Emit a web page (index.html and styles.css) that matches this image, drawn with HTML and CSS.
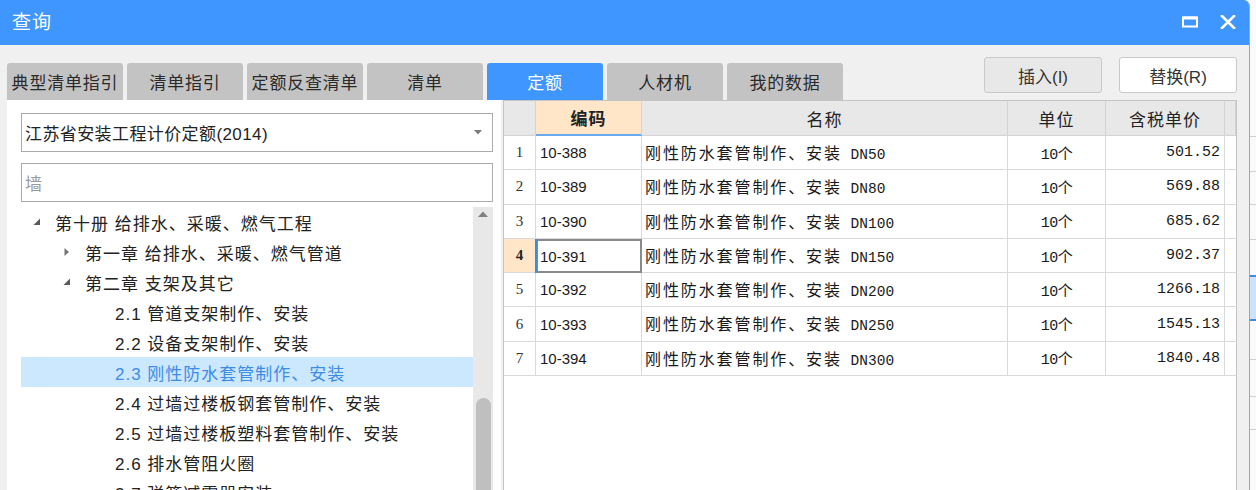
FILE: index.html
```html
<!DOCTYPE html>
<html lang="zh">
<head>
<meta charset="utf-8">
<title>查询</title>
<link rel="stylesheet" href="styles.css">
</head>
<body>
<div class="screen">
  <div class="dialog">
    <div class="titlebar">
      <span class="title">查询</span>
      <div class="win-btns">
        <svg class="win-ico" width="16" height="12" viewBox="0 0 16 12"><rect x="1" y="1.5" width="14" height="9" fill="none" stroke="#fff" stroke-width="2"/><rect x="1" y="0.5" width="14" height="3" fill="#fff"/></svg>
        <svg class="win-ico close" width="16" height="14" viewBox="0 0 16 14"><path d="M2 1 L14 13 M14 1 L2 13" stroke="#fff" stroke-width="2.6" stroke-linecap="square"/></svg>
      </div>
    </div>
    <div class="body">
      <div class="topbar">
        <div class="tabs">
          <div class="tab">典型清单指引</div>
          <div class="tab">清单指引</div>
          <div class="tab">定额反查清单</div>
          <div class="tab">清单</div>
          <div class="tab active">定额</div>
          <div class="tab">人材机</div>
          <div class="tab">我的数据</div>
        </div>
        <div class="actions">
          <button class="btn btn-insert">插入(I)</button>
          <button class="btn btn-replace">替换(R)</button>
        </div>
      </div>
      <div class="main">
        <div class="left">
          <div class="select">
            <span>江苏省安装工程计价定额(2014)</span>
            <svg width="8" height="5" viewBox="0 0 8 5"><path d="M0 0 H8 L4 4.5 Z" fill="#7a7a7a"/></svg>
          </div>
          <div class="search">墙</div>
          <div class="tree">
            <div class="tree-list">
              <div class="node lv1"><svg class="tw" width="8" height="8" viewBox="0 0 8 8"><path d="M7 0.5 V7 H0.5 Z" fill="#5a5a5a"/></svg><span>第十册 给排水、采暖、燃气工程</span></div>
              <div class="node lv2"><svg class="tw" width="8" height="10" viewBox="0 0 8 10"><path d="M1.5 1 L6 5 L1.5 9 Z" fill="#777"/></svg><span>第一章 给排水、采暖、燃气管道</span></div>
              <div class="node lv2"><svg class="tw" width="8" height="8" viewBox="0 0 8 8"><path d="M7 0.5 V7 H0.5 Z" fill="#5a5a5a"/></svg><span>第二章 支架及其它</span></div>
              <div class="node lv3"><span>2.1 管道支架制作、安装</span></div>
              <div class="node lv3"><span>2.2 设备支架制作、安装</span></div>
              <div class="node lv3 selected"><span>2.3 刚性防水套管制作、安装</span></div>
              <div class="node lv3"><span>2.4 过墙过楼板钢套管制作、安装</span></div>
              <div class="node lv3"><span>2.5 过墙过楼板塑料套管制作、安装</span></div>
              <div class="node lv3"><span>2.6 排水管阻火圈</span></div>
              <div class="node lv3"><span>2.7 弹簧减震器安装</span></div>
            </div>
            <div class="vscroll">
              <svg class="up" width="10" height="6" viewBox="0 0 10 6"><path d="M0 6 L5 0.5 L10 6 Z" fill="#808080"/></svg>
              <div class="thumb"></div>
            </div>
          </div>
        </div>
        <div class="right">
          <div class="grid">
            <div class="hd"></div>
            <div class="hd hd-code">编码</div>
            <div class="hd">名称</div>
            <div class="hd">单位</div>
            <div class="hd">含税单价</div>
            <div class="hd"></div>

            <div class="c num">1</div><div class="c code">10-388</div><div class="c name">刚性防水套管制作、安装<span class="dn">&nbsp;DN50</span></div><div class="c unit">10个</div><div class="c price">501.52</div><div class="c gut"></div>
            <div class="c num">2</div><div class="c code">10-389</div><div class="c name">刚性防水套管制作、安装<span class="dn">&nbsp;DN80</span></div><div class="c unit">10个</div><div class="c price">569.88</div><div class="c gut"></div>
            <div class="c num">3</div><div class="c code">10-390</div><div class="c name">刚性防水套管制作、安装<span class="dn">&nbsp;DN100</span></div><div class="c unit">10个</div><div class="c price">685.62</div><div class="c gut"></div>
            <div class="c num cur">4</div><div class="c code focus">10-391</div><div class="c name">刚性防水套管制作、安装<span class="dn">&nbsp;DN150</span></div><div class="c unit">10个</div><div class="c price">902.37</div><div class="c gut"></div>
            <div class="c num">5</div><div class="c code">10-392</div><div class="c name">刚性防水套管制作、安装<span class="dn">&nbsp;DN200</span></div><div class="c unit">10个</div><div class="c price">1266.18</div><div class="c gut"></div>
            <div class="c num">6</div><div class="c code">10-393</div><div class="c name">刚性防水套管制作、安装<span class="dn">&nbsp;DN250</span></div><div class="c unit">10个</div><div class="c price">1545.13</div><div class="c gut"></div>
            <div class="c num">7</div><div class="c code">10-394</div><div class="c name">刚性防水套管制作、安装<span class="dn">&nbsp;DN300</span></div><div class="c unit">10个</div><div class="c price">1840.48</div><div class="c gut"></div>
          </div>
        </div>
      </div>
    </div>
  </div>
  <div class="strip">
    <div class="s1"></div>
    <div class="s2"></div>
    <div class="s3"></div>
    <div class="s4"></div>
    <div class="s5"></div>
    <div class="s6 sel"></div>
    <div class="s7"></div>
    <div class="s8"></div>
    <div class="s9"></div>
    <div class="s10"></div>
  </div>
</div>
</body>
</html>
```

FILE: styles.css
```css
* { box-sizing: border-box; }
html, body { margin: 0; padding: 0; background: #fff; }
body {
  font-family: "Liberation Sans", "Noto Sans CJK SC", sans-serif;
  color: #222;
  width: 1256px;
  height: 490px;
  overflow: hidden;
}
.screen { display: flex; width: 1256px; height: 490px; }

.dialog {
  width: 1250px;
  height: 490px;
  border-right: 1px solid #a4a4a4;
  border-top-right-radius: 6px;
  overflow: hidden;
  display: flex;
  flex-direction: column;
  background: #f0f0f0;
}

.titlebar {
  height: 45px;
  background: #4096ff;
  display: flex;
  align-items: center;
  padding-left: 12px;
  flex: none;
}
.title {
  color: #fff;
  font-size: 19px;
  letter-spacing: 1px;
  line-height: 45px;
}
.win-btns {
  margin-left: auto;
  display: flex;
  align-items: center;
  gap: 22px;
  margin-right: 13px;
  margin-top: -2px;
}
.win-ico { display: block; }

.body { flex: 1; display: flex; flex-direction: column; }

.topbar {
  height: 55px;
  display: flex;
  padding-left: 7px;
  flex: none;
}
.tabs { display: flex; gap: 4px; align-self: flex-end; }
.tab {
  width: 116px;
  height: 37px;
  background: #c3c3c3;
  border-radius: 3px 3px 0 0;
  font-size: 17px;
  letter-spacing: 0.8px;
  color: #2a2a2a;
  display: flex;
  align-items: center;
  justify-content: center;
}
.tab.active { background: #4096ff; color: #fff; }

.actions {
  margin-left: auto;
  margin-right: 12px;
  padding-top: 12px;
  display: flex;
  gap: 17px;
  align-items: flex-start;
}
.btn {
  width: 118px;
  height: 36px;
  border: 1px solid #c9c9c9;
  border-radius: 3px;
  font-family: "Liberation Sans", "Noto Sans CJK SC", sans-serif;
  font-size: 17px;
  color: #333;
  padding: 0;
}
.btn-insert { background: #e8e8e8; }
.btn-replace { background: #fff; }

.main {
  flex: 1;
  display: flex;
  padding-left: 7px;
  min-height: 0;
}

.left {
  width: 494px;
  background: #fff;
  padding: 13px 8px 0 14px;
  display: flex;
  flex-direction: column;
  overflow: hidden;
}
.select {
  height: 39px;
  border: 1px solid #ababab;
  display: flex;
  align-items: center;
  padding: 0 10px 0 3px;
  font-size: 17px;
  letter-spacing: 0.4px;
  color: #222;
  flex: none;
}
.select svg { margin-left: auto; }
.search {
  height: 39px;
  margin-top: 11px;
  border: 1px solid #ababab;
  display: flex;
  align-items: center;
  padding-left: 3px;
  font-size: 17px;
  color: #9a9a9a;
  flex: none;
}
.tree {
  margin-top: 5px;
  display: flex;
  flex: 1;
  min-height: 0;
  overflow: hidden;
}
.tree-list { width: 452px; flex: none; }
.node {
  height: 30px;
  display: flex;
  align-items: center;
  font-size: 17px;
  letter-spacing: 1px;
  color: #222;
  white-space: nowrap;
}
.node .tw { flex: none; }
.lv1 { padding-left: 12px; }
.lv1 .tw { margin-right: 14px; }
.lv2 { padding-left: 42px; }
.lv2 .tw { margin-right: 14px; }
.lv3 { padding-left: 94px; }
.node.selected { background: #cce8ff; color: #3c8ce6; }

.vscroll {
  width: 20px;
  flex: none;
  background: #e8e8e8;
  display: flex;
  flex-direction: column;
  align-items: center;
}
.vscroll .up { margin-top: 4px; flex: none; }
.thumb {
  margin-top: 181px;
  width: 15px;
  height: 140px;
  background: #bfbfbf;
  border-radius: 8px 8px 0 0;
  flex: none;
}

.right {
  margin-left: 2px;
  width: 734px;
  background: #fff;
  border: 1px solid #c4c4c4;
  border-bottom: none;
}
.grid {
  display: grid;
  grid-template-columns: 32px 106px 366px 98px 119px 11px;
  grid-template-rows: 35px repeat(7, 34.3px);
}
.hd {
  background: #e8e8e8;
  border-right: 1px solid #d4d4d4;
  border-bottom: 1px solid #d4d4d4;
  display: flex;
  align-items: center;
  justify-content: center;
  font-size: 17px;
  letter-spacing: 1px;
  color: #222;
}
.hd-code {
  background: #ffe6c8;
  font-weight: bold;
  border-bottom: 2px solid #6aa9ee;
}
.c {
  border-right: 1px solid #d9d9d9;
  border-bottom: 1px solid #d9d9d9;
  display: flex;
  align-items: center;
  color: #1a1a1a;
  white-space: nowrap;
  overflow: hidden;
}
.num {
  justify-content: center;
  font-family: "Liberation Serif", serif;
  font-size: 15px;
  color: #333;
}
.num.cur { background: #ffe6c8; font-weight: bold; color: #222; }
.code {
  padding-left: 4px;
  font-family: "Liberation Sans", sans-serif;
  font-size: 15px;
}
.code.focus {
  border: 2px solid #8a8a8a;
  padding-left: 2px;
  position: relative;
  overflow: visible;
}
.code.focus::before {
  content: "";
  position: absolute;
  left: -3px;
  top: -2px;
  bottom: -2px;
  width: 2px;
  background: #3c8ce6;
}
.name {
  display: block;
  line-height: 33px;
  padding-left: 3px;
  font-family: "Noto Sans CJK SC", sans-serif;
  font-size: 16px;
  letter-spacing: 1.9px;
}
.dn {
  font-family: "Liberation Mono", monospace;
  font-size: 14.5px;
  letter-spacing: 0;
}
.unit {
  justify-content: center;
  font-family: "Liberation Mono", "Noto Sans CJK SC", monospace;
  font-size: 15px;
  letter-spacing: -0.5px;
}
.price {
  justify-content: flex-end;
  padding-right: 4px;
  font-family: "Liberation Mono", monospace;
  font-size: 15px;
}
.gut { border-right: none; }

.strip {
  flex: 1;
  display: flex;
  flex-direction: column;
  background: #fafafa;
}
.strip div { border-bottom: 1px solid #cfcfcf; flex: none; }
.s1 { height: 42px; border-bottom: none !important; }
.s2 { height: 95px; }
.s3 { height: 35px; }
.s4 { height: 33px; }
.s5 { height: 35px; }
.s6 { height: 37px; border-bottom: 2px solid #3c8ce6 !important; }
.s7 { height: 44px; background: #cfe2fb; border-bottom: 2px solid #3c8ce6 !important; }
.s8 { height: 39px; }
.s9 { height: 37px; }
.s10 { height: 33px; }
```
